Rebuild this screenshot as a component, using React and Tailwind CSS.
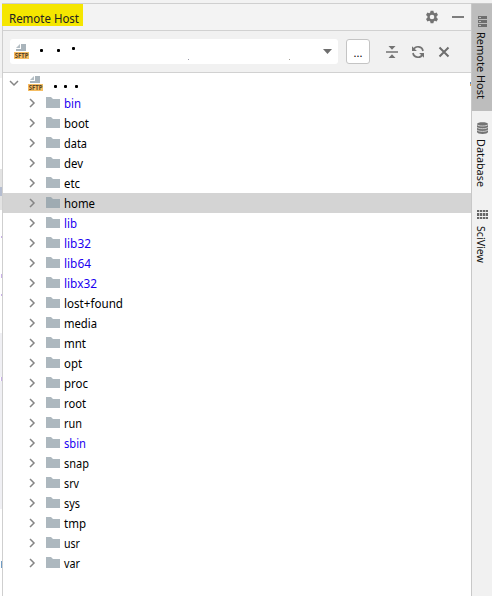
import React from "react";

const folders = [
  { name: "bin", link: true, w: 17 },
  { name: "boot", w: 25 },
  { name: "data", w: 23 },
  { name: "dev", w: 19 },
  { name: "etc", w: 16 },
  { name: "home", selected: true, w: 31 },
  { name: "lib", link: true, w: 13 },
  { name: "lib32", link: true, w: 27 },
  { name: "lib64", link: true, w: 27 },
  { name: "libx32", link: true, w: 33 },
  { name: "lost+found", w: 59 },
  { name: "media", w: 33 },
  { name: "mnt", w: 22 },
  { name: "opt", w: 18 },
  { name: "proc", w: 24 },
  { name: "root", w: 22 },
  { name: "run", w: 18 },
  { name: "sbin", link: true, w: 22 },
  { name: "snap", w: 25 },
  { name: "srv", w: 15 },
  { name: "sys", w: 16 },
  { name: "tmp", w: 22 },
  { name: "usr", w: 16 },
  { name: "var", w: 16 },
];

function Label({ width, className = "", children }) {
  return (
    <svg className={"block h-5 shrink-0 overflow-visible " + className} width={width} height="20">
      <text x="0" y="15" fontSize="12.8" textLength={width} lengthAdjust="spacingAndGlyphs" fill="currentColor">
        {children}
      </text>
    </svg>
  );
}

function SftpIcon() {
  return (
    <svg className="block h-4 w-4 shrink-0 overflow-visible" viewBox="0 0 16 16">
      <path d="M7 0h5v7H2V5h5z" fill="#a9b4bb" />
      <path d="M6 0v4H2z" fill="#b4bec4" />
      <rect x="0" y="8" width="15" height="7" fill="#f5bd62" />
      <text x="0.8" y="14" fontSize="7" fontWeight="700" textLength="13.6" lengthAdjust="spacingAndGlyphs" fill="#5a4526">
        SFTP
      </text>
    </svg>
  );
}

function Folder({ dim }) {
  return (
    <svg className="block h-[11px] w-[14px] shrink-0" viewBox="0 0 14 11">
      <path d="M0 0h5l2 2h7v9H0z" fill={dim ? "#9fabb2" : "#adb8bf"} />
    </svg>
  );
}

function Chevron({ open }) {
  return (
    <svg className="block h-[10px] w-[10px] shrink-0" viewBox="0 0 10 10" fill="none" stroke="#858585" strokeWidth="1.5">
      {open ? <path d="M1 3l4 4 4-4" /> : <path d="M3 1l4 4-4 4" />}
    </svg>
  );
}

function Dot({ className = "" }) {
  return <span className={"block h-[3px] w-[3px] shrink-0 rounded-[1px] bg-black " + className} />;
}

function Gear() {
  return (
    <svg className="block h-[14px] w-[14px]" viewBox="0 0 14 14" fill="#737373">
      <path
        fillRule="evenodd"
        d="M5.6 .8h2.8l.4 1.8 1 .6 1.8-.6L13 5l-1.4 1.3v1.4L13 9l-1.4 2.4-1.8-.6-1 .6-.4 1.8H5.6l-.4-1.8-1-.6-1.8.6L1 9l1.4-1.3V6.3L1 5l1.4-2.4 1.8.6 1-.6zM7 4.7a2.3 2.3 0 1 0 0 4.6 2.3 2.3 0 0 0 0-4.6z"
      />
    </svg>
  );
}

function Collapse() {
  return (
    <svg className="block h-[14px] w-[14px]" viewBox="0 0 14 14" fill="#737373">
      <path d="M3.5 1h7L7 4.8zM3.5 13h7L7 9.2zM1 6.2h12v1.6H1z" />
    </svg>
  );
}

function Refresh() {
  return (
    <svg className="block h-[14px] w-[14px]" viewBox="0 0 14 14">
      <g fill="none" stroke="#737373" strokeWidth="1.7">
        <path d="M2.6 4.5A5 5 0 0 1 12 6" />
        <path d="M11.4 9.5A5 5 0 0 1 2 8" />
      </g>
      <path d="M1 1.2v4.9h4.9zM13 12.8V7.9H8.1z" fill="#737373" />
    </svg>
  );
}

function HostIcon() {
  return (
    <svg className="block h-[11px] w-[9px]" viewBox="0 0 9 11">
      <path d="M0 0h9v3H0zM0 4h9v3H0zM0 8h9v3H0z" fill="#6e6e6e" />
      <path d="M1 1h2v1H1zM1 5h2v1H1zM1 9h2v1H1z" fill="#bdbdbd" />
    </svg>
  );
}

function DatabaseIcon() {
  return (
    <svg className="block h-[12px] w-[11px]" viewBox="0 0 11 12">
      <path d="M0 2C0-.5 11-.5 11 2v8c0 2.6-11 2.6-11 0z" fill="#737373" />
      <path d="M0 2.5c1 2 10 2 11 0M0 5.2c1 2 10 2 11 0M0 7.9c1 2 10 2 11 0" fill="none" stroke="#e4e4e4" strokeWidth=".8" />
    </svg>
  );
}

function GridIcon() {
  return (
    <svg className="block h-[9px] w-[11px]" viewBox="0 0 11 9">
      <path d="M0 0h2v2H0zM2.7 0h2.6v2H2.7zM6 0h2.4v2H6zM9 0h2v2H9zM0 3h2v3H0zM2.7 3h2.6v3H2.7zM6 3h2.4v3H6zM9 3h2v3H9zM0 7h2v2H0zM2.7 7h2.6v2H2.7zM6 7h2.4v2H6zM9 7h2v2H9z" fill="#666" />
    </svg>
  );
}

function SideLabel({ length, children }) {
  return (
    <svg className="block w-5 overflow-visible" width="20" height={length}>
      <text transform="translate(5.2 0) rotate(90)" x="0" y="0" fontSize="11.3" textLength={length} lengthAdjust="spacingAndGlyphs" fill="#111">
        {children}
      </text>
    </svg>
  );
}

function EdgeStrip() {
  return (
    <div className="w-[2px] shrink-0 bg-white">
      <div className="h-[78px] bg-[#f2f2f2]" />
      <div className="mt-[91px] h-[18px] bg-[#e3e3e3]" />
      <div className="h-[9px] bg-[#b5bdd0]" />
      <div className="h-[14px] bg-[#e3e3e3]" />
      <div className="mt-[26px] ml-px h-[2px] bg-[#c9b0e8]" />
      <div className="mt-[36px] ml-px h-[4px] bg-[#c9b0e8]" />
      <div className="mt-[16px] ml-px h-[2px] bg-[#c9b0e8]" />
      <div className="mt-[37px] h-[44px] bg-[#f0f0f4]" />
      <div className="ml-px h-[4px] bg-[#c9b0e8]" />
      <div className="h-[128px] bg-[#f0f0f4]" />
      <div className="mt-[52px] ml-px h-[7px] bg-[#6f9cc4]" />
    </div>
  );
}

export default function App() {
  return (
    <div className="flex h-[596px] w-[492px] flex-col overflow-hidden bg-white font-['Noto_Sans','Open_Sans',sans-serif] text-black">
      <div className="h-[3px] shrink-0 bg-[#f2f2f2]" />
      <div className="-mt-[3px] flex min-h-0 flex-1">
        <EdgeStrip />
        <main className="mt-[3px] flex min-w-0 flex-1 flex-col border-t border-l border-[#cfcfcf]">
          <header className="flex h-[27px] shrink-0 items-start border-b border-[#d1d1d1] bg-[#f3f3f3]">
            <div className="-ml-px h-[22px] w-[81px] bg-[#f5e600] pt-[4px] pl-[7px]">
              <Label width={70} className="text-[#222]">Remote Host</Label>
            </div>
            <div className="mt-[6px] mr-[7px] ml-auto flex items-center gap-[13px]">
              <Gear />
              <span className="block h-[2px] w-[12px] bg-[#7d7d7d]" />
            </div>
          </header>
          <div className="flex h-[42px] shrink-0 items-center border-b border-[#d1d1d1] bg-[#f1f1f1]">
            <div className="ml-[7px] flex h-[25px] w-[328px] items-center rounded-[3px] bg-white pl-[4px]">
              <SftpIcon />
              <Dot className="-mt-[3px] ml-[10px]" />
              <Dot className="-mt-[3px] ml-[14px]" />
              <Dot className="-mt-[7px] ml-[12px]" />
              <span className="mt-[16px] ml-[113px] block h-px w-px bg-[#9999a8]" />
              <span className="mt-[16px] ml-[100px] block h-px w-px bg-[#a59f95]" />
              <svg className="mr-[6px] ml-auto block h-[5px] w-[9px]" viewBox="0 0 9 5">
                <path d="M0 0h9L4.5 5z" fill="#6e6e6e" />
              </svg>
            </div>
            <div className="ml-[8px] flex h-[25px] w-[24px] items-center justify-center rounded-[3px] border border-[#c4c4c4] bg-white">
              <span className="mt-[2px] text-[11px] leading-none">...</span>
            </div>
            <div className="ml-[15px] flex items-center gap-[12px]">
              <Collapse />
              <Refresh />
              <svg className="block h-[14px] w-[14px]" viewBox="0 0 14 14" fill="none" stroke="#6e6e6e" strokeWidth="2">
                <path d="M2.5 2.5l9 9M11.5 2.5l-9 9" />
              </svg>
            </div>
          </div>
          <div className="flex-1 bg-white">
            <div className="flex h-5 items-center">
              <span className="-mt-px ml-[6px]"><Chevron open /></span>
              <span className="mt-[2px] ml-[9px]"><SftpIcon /></span>
              <Dot className="mt-[7px] ml-[10px]" />
              <Dot className="mt-[7px] ml-[7px]" />
              <Dot className="mt-[7px] ml-[8px]" />
              <span className="mt-[2px] ml-auto flex h-[4px] w-px flex-col">
                <span className="h-[2px] bg-[#5c86b8]" />
                <span className="h-[2px] bg-[#e5a34c]" />
              </span>
            </div>
            <ul>
              {folders.map(({ name, link, selected, w }) => (
                <li key={name} className={"flex h-5 items-center " + (selected ? "bg-[#d4d4d4]" : "")}>
                  <span className="-mt-px ml-[24px]"><Chevron /></span>
                  <span className="-mt-px ml-[9px]"><Folder dim={selected} /></span>
                  <span className="ml-[4px]">
                    <Label width={w} className={link ? "text-[#1a00f0]" : "text-black"}>{name}</Label>
                  </span>
                </li>
              ))}
            </ul>
          </div>
        </main>
        <aside className="mt-[3px] w-[21px] shrink-0 border-t border-l border-[#c8c8c8] bg-[#f1f1f1]">
          <div className="flex h-[107px] flex-col items-center bg-[#bdbdbd] pt-[12px]">
            <HostIcon />
            <div className="mt-[5px]"><SideLabel length={67}>Remote Host</SideLabel></div>
          </div>
          <div className="mt-[11px] flex flex-col items-center">
            <DatabaseIcon />
            <div className="mt-[5px]"><SideLabel length={48}>Database</SideLabel></div>
          </div>
          <div className="mt-[23px] flex flex-col items-center">
            <GridIcon />
            <div className="mt-[7px]"><SideLabel length={37}>SciView</SideLabel></div>
          </div>
        </aside>
      </div>
    </div>
  );
}
